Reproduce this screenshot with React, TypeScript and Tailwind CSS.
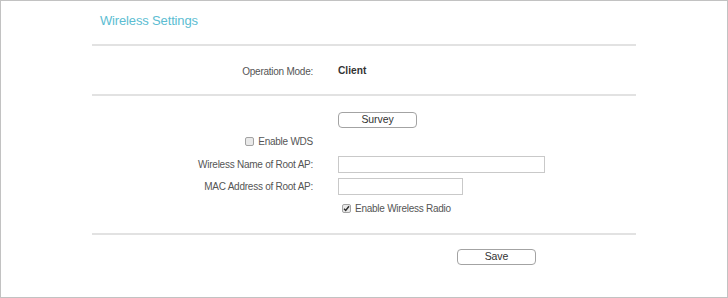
import React from 'react';

const font = { fontFamily: '"Liberation Sans", Arial, sans-serif' };

const Divider = () => <div className="h-[2px] w-full bg-[#e2e2e2]" />;

const Box: React.FC<{ checked?: boolean }> = ({ checked }) => (
  <span className="flex h-[9px] w-[9px] items-center justify-center rounded-[2px] border border-[#a3a3a3] bg-[#e9e9e9]">
    {checked && (
      <svg width="7" height="7" viewBox="0 0 7 7">
        <path d="M1 3.8 L2.7 5.5 L6 1.3" fill="none" stroke="#2b2b2b" strokeWidth="1.4" />
      </svg>
    )}
  </span>
);

const Row: React.FC<{ label?: React.ReactNode; className?: string; children?: React.ReactNode }> = ({
  label,
  className = '',
  children,
}) => (
  <div className={`flex items-center ${className}`}>
    <div className="flex w-[221px] justify-end text-[10px] tracking-[-0.25px] text-[#555]">{label}</div>
    <div className="ml-[25px] flex items-center">{children}</div>
  </div>
);

const Button: React.FC<{ children: React.ReactNode; className?: string }> = ({ children, className = '' }) => (
  <button
    className={`flex h-[16px] items-center justify-center rounded-[4px] border border-[#a3a3a3] bg-white text-[10.5px] tracking-[-0.1px] text-[#333] ${className}`}
  >
    {children}
  </button>
);

export default function App() {
  return (
    <div style={font} className="h-[298px] w-[728px] border border-[#c2c2c2] bg-white">
      <div className="ml-[91px] w-[544px]">
        <div className="h-[43px] pl-[8px] pt-[12px] text-[13px] leading-[16px] tracking-[-0.15px] text-[#5cbdd2]">
          Wireless Settings
        </div>
        <Divider />

        <Row label="Operation Mode:" className="h-[48px] pt-[2px]">
          <span className="text-[10.2px] font-bold text-[#333]">Client</span>
        </Row>
        <Divider />

        <Row className="mt-[16px] h-[16px]">
          <Button className="w-[79px]">Survey</Button>
        </Row>
        <Row
          className="mt-[5px] h-[16px]"
          label={
            <span className="flex items-center gap-[4px]">
              <Box />
              Enable WDS
            </span>
          }
        />
        <Row label="Wireless Name of Root AP:" className="mt-[7px] h-[17px]">
          <input className="h-[17px] w-[207px] border border-[#c9c9c9] bg-white outline-none" />
        </Row>
        <Row label="MAC Address of Root AP:" className="mt-[5px] h-[17px]">
          <input className="h-[17px] w-[125px] border border-[#c9c9c9] bg-white outline-none" />
        </Row>
        <Row className="mt-[5px] h-[16px]">
          <span className="ml-[4px] flex items-center gap-[4px] text-[10px] tracking-[-0.25px] text-[#555]">
            <Box checked />
            Enable Wireless Radio
          </span>
        </Row>

        <div className="mt-[17px]">
          <Divider />
        </div>
        <div className="mt-[14px] flex pl-[365px]">
          <Button className="w-[79px]">Save</Button>
        </div>
      </div>
    </div>
  );
}
